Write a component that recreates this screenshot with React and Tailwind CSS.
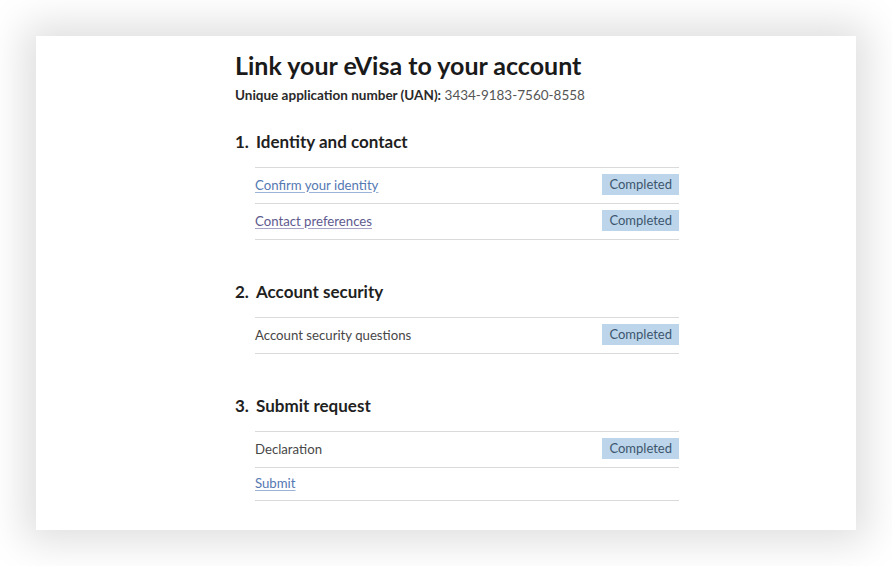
import React from 'react';

const sections = [
  {
    n: '1.',
    title: 'Identity and contact',
    rows: [
      { label: 'Confirm your identity', kind: 'link', done: true },
      { label: 'Contact preferences', kind: 'visited', done: true },
    ],
  },
  {
    n: '2.',
    title: 'Account security',
    rows: [{ label: 'Account security questions', kind: 'text', done: true }],
  },
  {
    n: '3.',
    title: 'Submit request',
    rows: [
      { label: 'Declaration', kind: 'text', done: true },
      { label: 'Submit', kind: 'link', done: false },
    ],
  },
];

const labelClass = {
  link: 'text-[#5579b2] underline decoration-[#9bb3d6] underline-offset-2',
  visited: 'text-[#5e5a8e] underline decoration-[#a7a3c6] underline-offset-2',
  text: 'text-[#474747]',
};

const App = () => {
  return (
    <div
      className="w-[892px] h-[566px] bg-white p-[36px] overflow-hidden"
      style={{ fontFamily: 'Lato, "Noto Sans", Arial, sans-serif' }}
    >
      <div className="w-[820px] h-[494px] bg-white shadow-[0_0_38px_12px_rgba(0,0,0,0.13)] pl-[199px] pt-[13px]">
        <div className="w-[444px]">
          {/* Header */}
          <h1 className="text-[25px] leading-[33px] font-bold text-[#1a1a1a]">
            Link your eVisa to your account
          </h1>
          <p className="mt-[4px] text-[13.5px] leading-[18px] text-[#555]">
            <span className="font-bold text-[#2a2a2a]">Unique application number (UAN):</span>{' '}
            3434-9183-7560-8558
          </p>

          {sections.map((s, i) => (
            <div key={s.n} className={i === 0 ? 'mt-[26px]' : 'mt-[40px]'}>
              <h2 className="flex text-[17px] leading-[24px] font-bold text-[#1f1f1f]">
                <span className="w-[21px]">{s.n}</span>
                <span>{s.title}</span>
              </h2>
              <ul className="mt-[13px] ml-[20px] border-t border-[#dadada]">
                {s.rows.map((r) => (
                  <li
                    key={r.label}
                    className="flex items-center justify-between pt-[6px] pb-[8px] border-b border-[#dadada] text-[13.2px] leading-[18px]"
                  >
                    <span className={labelClass[r.kind]}>{r.label}</span>
                    {r.done && (
                      <span className="h-[21px] leading-[21px] px-[7px] bg-[#bcd5ea] text-[#3d566e] text-[13px]">
                        Completed
                      </span>
                    )}
                  </li>
                ))}
              </ul>
            </div>
          ))}
        </div>
      </div>
    </div>
  );
};

export default App;
